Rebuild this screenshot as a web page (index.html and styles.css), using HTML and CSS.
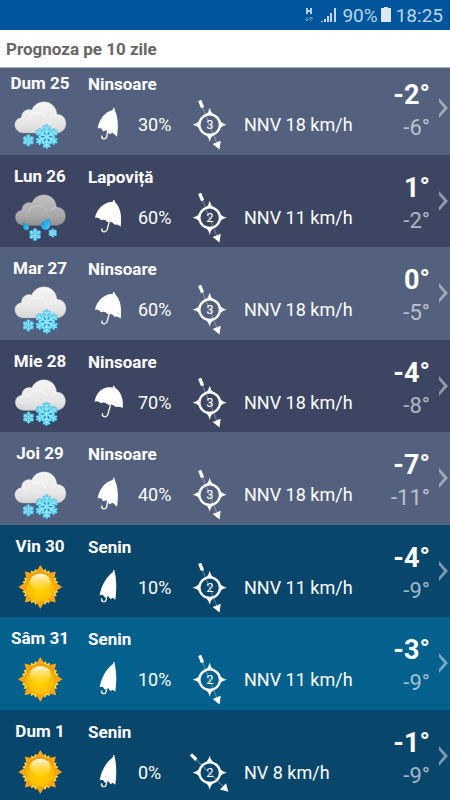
FILE: index.html
```html
<!DOCTYPE html>
<html lang="ro">
<head>
<meta charset="utf-8">
<meta name="viewport" content="width=device-width, initial-scale=1">
<title>Prognoza pe 10 zile</title>
<link rel="stylesheet" href="styles.css">
</head>
<body>
<svg class="defs" aria-hidden="true">
  <defs>
    <linearGradient id="white-cloud" x1="0" y1="0" x2="0" y2="1"><stop offset="0" stop-color="#f6f6f6"/><stop offset=".7" stop-color="#e6e6e6"/><stop offset="1" stop-color="#d4d4d5"/></linearGradient>
    <linearGradient id="grey-cloud" x1="0" y1="0" x2="0" y2="1"><stop offset="0" stop-color="#c2c2c2"/><stop offset=".7" stop-color="#a8a8a8"/><stop offset="1" stop-color="#909090"/></linearGradient>
    <linearGradient id="drop-fill" x1="0" y1="0" x2="1" y2="1"><stop offset="0" stop-color="#0a8fd2"/><stop offset="1" stop-color="#4fd0fa"/></linearGradient>
    <radialGradient id="sun-disc" cx=".5" cy=".6" r=".55"><stop offset="0" stop-color="#ffd400"/><stop offset=".75" stop-color="#fdbd04"/><stop offset="1" stop-color="#f3a000"/></radialGradient>
    <linearGradient id="sun-shine" x1="0" y1="0" x2="0" y2="1"><stop offset="0" stop-color="#fffbe6"/><stop offset="1" stop-color="#ffe04a" stop-opacity=".15"/></linearGradient>
    <path id="arm" d="M0 0V-33M0 -12L-9 -20M0 -12L9 -20M0 -22L-8 -29M0 -22L8 -29"/>
    <g id="flake"><use href="#arm"/><use href="#arm" transform="rotate(60)"/><use href="#arm" transform="rotate(120)"/><use href="#arm" transform="rotate(180)"/><use href="#arm" transform="rotate(240)"/><use href="#arm" transform="rotate(300)"/></g>
    <g id="snowflake" stroke-linecap="round" fill="none"><use href="#flake" stroke="#22aee6" stroke-width="8"/><use href="#flake" stroke="#8fe6ff" stroke-width="5"/></g>
    <g id="cloud-puffs" fill="none" stroke="#fff" stroke-width="3"><path d="M34 54Q47 52 54 59" opacity=".6"/><path d="M56 56Q61 39 82 38Q103 38 110 55" opacity=".75"/><path d="M119 55Q129 44 142 45" opacity=".75"/></g>
    <path id="major-ray" d="M-17 -40L0 -67L17 -40Z"/>
    <path id="minor-ray" d="M-14 -40L-7 -57L0 -50L7 -57L14 -40Z"/>
  </defs>
  <symbol id="snow" viewBox="0 0 180 165">
    <path d="M41 99C8 98 6 56 34 53C35 32 52 26 65 30C80 -7 137 -3 141 43C175 43 178 94 143 99Z" fill="url(#white-cloud)" stroke="#b4b6bc" stroke-width="1"/>
    <use href="#cloud-puffs"/>
    <use href="#snowflake" transform="translate(110 110)"/>
    <use href="#snowflake" transform="translate(55 121) scale(.5)"/>
  </symbol>
  <symbol id="sleet" viewBox="0 0 180 165">
    <path d="M41 99C8 98 6 56 34 53C35 32 52 26 65 30C80 -7 137 -3 141 43C175 43 178 94 143 99Z" fill="url(#grey-cloud)" stroke="#7b7b7e" stroke-width="1"/>
    <use href="#cloud-puffs" opacity=".4"/>
    <path d="M119 79C122 98 124 111 108 112C93 112 86 94 101 87Q112 82 119 79Z" fill="url(#drop-fill)" stroke="#0a8bcc"/>
    <path d="M38 91C51 95 57 100 56 107C54 116 40 115 39 105Z" fill="url(#drop-fill)" stroke="#0a8bcc"/>
    <use href="#snowflake" transform="translate(75 127) scale(.54)"/>
    <use href="#snowflake" transform="translate(129 122) scale(.38)"/>
  </symbol>
  <symbol id="sun" viewBox="0 0 180 165">
    <g transform="translate(91 73)">
      <g fill="#ffd83c"><use href="#minor-ray" transform="rotate(22.5)"/><use href="#minor-ray" transform="rotate(67.5)"/><use href="#minor-ray" transform="rotate(112.5)"/><use href="#minor-ray" transform="rotate(157.5)"/><use href="#minor-ray" transform="rotate(202.5)"/><use href="#minor-ray" transform="rotate(247.5)"/><use href="#minor-ray" transform="rotate(292.5)"/><use href="#minor-ray" transform="rotate(337.5)"/></g>
      <g fill="#f6a418"><use href="#major-ray"/><use href="#major-ray" transform="rotate(45)"/><use href="#major-ray" transform="rotate(90)"/><use href="#major-ray" transform="rotate(135)"/><use href="#major-ray" transform="rotate(180)"/><use href="#major-ray" transform="rotate(225)"/><use href="#major-ray" transform="rotate(270)"/><use href="#major-ray" transform="rotate(315)"/></g>
      <circle r="46" fill="url(#sun-disc)" stroke="#ec9600"/>
      <ellipse cy="-14" rx="32" ry="26" fill="url(#sun-shine)"/>
    </g>
  </symbol>
  <symbol id="umbrella-closed" viewBox="0 0 108 120">
    <path fill="#fff" d="M69 12C48 28 34 52 29 82L38 80L45 89L54 84L62 94L68 89L76 95C80 65 80 35 74 12L73 6L70 6Z"/>
    <path fill="none" stroke="#fff" stroke-width="4" d="M50 84L49 94Q47 102 40 101Q33 99 35 91"/>
  </symbol>
  <symbol id="umbrella-half" viewBox="0 0 108 120">
    <path fill="#fff" d="M68 15C45 20 27 44 23 70L34 70L39 79L50 76L58 88L68 83L81 95C86 65 84 33 74 15L73 8L70 8Z"/>
    <path fill="none" stroke="#fff" stroke-width="4" d="M53 78L50 96Q47 103 39 101Q33 98 36 92"/>
  </symbol>
  <symbol id="umbrella-open" viewBox="0 0 108 120">
    <path fill="#fff" d="M68 12C45 10 20 32 15 59Q27 57 33 67Q45 62 52 72Q66 68 74 80Q84 78 92 86C96 55 92 28 75 12L73 6L69 7Z"/>
    <path fill="none" stroke="#fff" stroke-width="4" d="M58 70L51 96Q47 103 40 101Q33 98 37 92"/>
  </symbol>
  <symbol id="umbrella-wide" viewBox="0 0 108 120">
    <path fill="#fff" d="M68 14C40 7 17 30 14 56Q25 52 32 60Q46 55 56 66Q68 61 77 72Q88 69 98 75C102 50 93 25 75 14L73 8L69 8Z"/>
    <path fill="none" stroke="#fff" stroke-width="4" d="M62 64L53 96Q49 103 42 101Q35 98 38 91"/>
  </symbol>
  <symbol id="compass" viewBox="0 0 180 192">
    <g transform="translate(89 104)">
      <circle r="31" fill="none" stroke="#fff" stroke-width="7"/>
      <path fill="#fff" d="M-10 -32Q-3 -38 0 -51Q3 -38 10 -32ZM-10 32Q-3 38 0 51Q3 38 10 32ZM-32 -10Q-38 -3 -51 0Q-38 3 -32 10ZM32 -10Q38 -3 51 0Q38 3 32 10Z"/>
    </g>
  </symbol>
  <symbol id="needle" viewBox="-89 -104 180 192">
    <path stroke="#fff" stroke-opacity=".35" stroke-width="3" d="M0 -56V56"/>
    <path fill="#fff" d="M-5 -79H5V-56H-5ZM-13 57H13L0 80Z"/>
  </symbol>
  <symbol id="chevron" viewBox="0 0 11 22"><path d="M1 1V5L6 11L1 17V21L10 11Z" fill="#fff"/></symbol>
</svg>

<div class="status">
  <svg class="network" viewBox="0 0 10 16" aria-hidden="true"><path d="M3 1V7M7 1V7M3 4H7" stroke="#b5d0e8" stroke-width="2"/><path d="M3 10V14M1 12L3 14L5 12M7 14V10M5 12L7 10L9 12" fill="none" stroke="#6c9bc9"/></svg>
  <svg class="signal" viewBox="0 0 16 16" aria-hidden="true"><path d="M0 14H2V15H0ZM3 12H5V15H3ZM6 9H8V15H6ZM9 6H11V15H9ZM13 1H15V15H13Z" fill="#c3d9ed"/></svg>
  <span>90%</span>
  <svg class="battery" viewBox="0 0 10 16" aria-hidden="true"><path d="M3 0H7V1H10V15H0V1H3Z" fill="#dce9f5"/></svg>
  <time>18:25</time>
</div>
<header class="title"><h1>Prognoza pe 10 zile</h1></header>
<main class="forecast">
  <ol class="days">
    <li><a class="day cold" href="#d25">
      <span class="when"><b>Dum 25</b><svg class="sky"><use href="#snow"/></svg></span>
      <span class="info"><b>Ninsoare</b><span class="facts"><svg class="umbrella"><use href="#umbrella-half"/></svg><span class="rain">30%</span><span class="rose"><svg><use href="#compass"/></svg><svg class="nnv"><use href="#needle"/></svg><span>3</span></span><span>NNV 18 km/h</span></span></span>
      <span class="temps"><b>-2°</b><span>-6°</span></span><svg class="chevron"><use href="#chevron"/></svg>
    </a></li>
    <li><a class="day cold" href="#d26">
      <span class="when"><b>Lun 26</b><svg class="sky"><use href="#sleet"/></svg></span>
      <span class="info"><b>Lapoviță</b><span class="facts"><svg class="umbrella"><use href="#umbrella-open"/></svg><span class="rain">60%</span><span class="rose"><svg><use href="#compass"/></svg><svg class="nnv"><use href="#needle"/></svg><span>2</span></span><span>NNV 11 km/h</span></span></span>
      <span class="temps"><b>1°</b><span>-2°</span></span><svg class="chevron"><use href="#chevron"/></svg>
    </a></li>
    <li><a class="day cold" href="#d27">
      <span class="when"><b>Mar 27</b><svg class="sky"><use href="#snow"/></svg></span>
      <span class="info"><b>Ninsoare</b><span class="facts"><svg class="umbrella"><use href="#umbrella-open"/></svg><span class="rain">60%</span><span class="rose"><svg><use href="#compass"/></svg><svg class="nnv"><use href="#needle"/></svg><span>3</span></span><span>NNV 18 km/h</span></span></span>
      <span class="temps"><b>0°</b><span>-5°</span></span><svg class="chevron"><use href="#chevron"/></svg>
    </a></li>
    <li><a class="day cold" href="#d28">
      <span class="when"><b>Mie 28</b><svg class="sky"><use href="#snow"/></svg></span>
      <span class="info"><b>Ninsoare</b><span class="facts"><svg class="umbrella"><use href="#umbrella-wide"/></svg><span class="rain">70%</span><span class="rose"><svg><use href="#compass"/></svg><svg class="nnv"><use href="#needle"/></svg><span>3</span></span><span>NNV 18 km/h</span></span></span>
      <span class="temps"><b>-4°</b><span>-8°</span></span><svg class="chevron"><use href="#chevron"/></svg>
    </a></li>
    <li><a class="day cold" href="#d29">
      <span class="when"><b>Joi 29</b><svg class="sky"><use href="#snow"/></svg></span>
      <span class="info"><b>Ninsoare</b><span class="facts"><svg class="umbrella"><use href="#umbrella-half"/></svg><span class="rain">40%</span><span class="rose"><svg><use href="#compass"/></svg><svg class="nnv"><use href="#needle"/></svg><span>3</span></span><span>NNV 18 km/h</span></span></span>
      <span class="temps"><b>-7°</b><span>-11°</span></span><svg class="chevron"><use href="#chevron"/></svg>
    </a></li>
    <li><a class="day clear" href="#d30">
      <span class="when"><b>Vin 30</b><svg class="sky"><use href="#sun"/></svg></span>
      <span class="info"><b>Senin</b><span class="facts"><svg class="umbrella"><use href="#umbrella-closed"/></svg><span class="rain">10%</span><span class="rose"><svg><use href="#compass"/></svg><svg class="nnv"><use href="#needle"/></svg><span>2</span></span><span>NNV 11 km/h</span></span></span>
      <span class="temps"><b>-4°</b><span>-9°</span></span><svg class="chevron"><use href="#chevron"/></svg>
    </a></li>
    <li><a class="day clear" href="#d31">
      <span class="when"><b>Sâm 31</b><svg class="sky"><use href="#sun"/></svg></span>
      <span class="info"><b>Senin</b><span class="facts"><svg class="umbrella"><use href="#umbrella-closed"/></svg><span class="rain">10%</span><span class="rose"><svg><use href="#compass"/></svg><svg class="nnv"><use href="#needle"/></svg><span>2</span></span><span>NNV 11 km/h</span></span></span>
      <span class="temps"><b>-3°</b><span>-9°</span></span><svg class="chevron"><use href="#chevron"/></svg>
    </a></li>
    <li><a class="day clear" href="#d1">
      <span class="when"><b>Dum 1</b><svg class="sky"><use href="#sun"/></svg></span>
      <span class="info"><b>Senin</b><span class="facts"><svg class="umbrella"><use href="#umbrella-closed"/></svg><span class="rain">0%</span><span class="rose"><svg><use href="#compass"/></svg><svg class="nv"><use href="#needle"/></svg><span>2</span></span><span>NV 8 km/h</span></span></span>
      <span class="temps"><b>-1°</b><span>-9°</span></span><svg class="chevron"><use href="#chevron"/></svg>
    </a></li>
  </ol>
</main>
</body>
</html>
```
FILE: styles.css
```css
* { box-sizing: border-box; }

body {
  margin: 0;
  height: 100vh;
  display: flex;
  flex-direction: column;
  font-family: Roboto, "Noto Sans", sans-serif;
  background: #09466c;
}

.defs { position: absolute; width: 0; height: 0; }

.status {
  flex: none;
  display: flex;
  align-items: center;
  justify-content: flex-end;
  height: 30px;
  padding-right: 7px;
  background: #00559c;
  color: #bdd5eb;
  font-size: 19px;
}
.status span { margin: 0 3px 0 5px; }
.status time { margin-left: 5px; }
.network { width: 10px; height: 16px; margin-right: 7px; }
.signal { width: 16px; height: 16px; }
.battery { width: 10px; height: 16px; }

.title {
  flex: none;
  display: flex;
  align-items: center;
  height: 38px;
  padding: 1px 6px 0;
  background: #fff;
  border-bottom: 1px solid #a9b0bf;
}
.title h1 { margin: 0; font-size: 17px; font-weight: 700; color: #666; }

.forecast { flex: 1; min-height: 0; overflow: hidden; }

/* The list is scrolled slightly under the title. */
.days { list-style: none; margin: -6px 0 0; padding: 0; }

.day {
  display: flex;
  height: 92px;
  color: #fff;
  text-decoration: none;
  font-size: 18px;
  line-height: 24px;
}
li:nth-child(odd) .day { height: 93px; }
li:nth-child(odd) .cold { background: #53617e; }
li:nth-child(even) .cold { background: #3c4562; }
li:nth-child(odd) .clear { background: #04608d; }
li:nth-child(even) .clear { background: #09466c; }

.when b, .info b { font-size: 17px; font-weight: 700; }

.when {
  flex: none;
  width: 80px;
  display: flex;
  flex-direction: column;
  align-items: center;
  padding-top: 9px;
}
.sky { width: 60px; height: 55px; margin-top: 5px; }

.info { flex: 1; display: flex; flex-direction: column; padding: 10px 0 0 8px; }
.facts { display: flex; align-items: center; height: 58px; white-space: nowrap; }
.umbrella { flex: none; width: 36px; height: 40px; margin-left: 2px; }
.rain { width: 42px; margin-left: 12px; }
.rose { display: grid; flex: none; width: 60px; margin: 0 4px 6px 0; }
.rose > * { grid-area: 1 / 1; }
.rose svg { width: 60px; height: 64px; }
.rose span { width: 60px; place-self: center; padding-top: 5px; font-size: 13px; text-align: center; }
.nnv, .nv { transform-origin: 30px 35px; }
.nnv { transform: rotate(-22deg); }
.nv { transform: rotate(-45deg); }

.temps {
  flex: none;
  display: flex;
  flex-direction: column;
  align-items: flex-end;
  padding-top: 17px;
}
.temps b { font-size: 27px; line-height: 32px; }
.temps span { font-size: 22px; line-height: 34px; opacity: .6; }

.chevron { flex: none; width: 11px; height: 22px; margin: 35px 1px 0 8px; opacity: .45; }
```
